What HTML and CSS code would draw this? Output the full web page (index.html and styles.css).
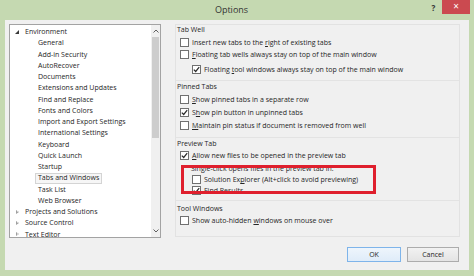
FILE: index.html
```html
<!DOCTYPE html>
<html lang="en">
<head>
    <link rel="stylesheet" href="styles.css">
</head>
<body>
    <div class="window">
        <div class="titlebar">
            <div class="title">Options</div>
            <div class="help">?</div>
            <div class="close">&#215;</div>
        </div>
        <div class="client">
            <div class="main">
                <div class="tree">
                    <ul class="tree-list">
                        <li class="node"><span class="exp open"></span>Environment</li>
                        <li class="leaf">General</li>
                        <li class="leaf">Add-in Security</li>
                        <li class="leaf">AutoRecover</li>
                        <li class="leaf">Documents</li>
                        <li class="leaf">Extensions and Updates</li>
                        <li class="leaf">Find and Replace</li>
                        <li class="leaf">Fonts and Colors</li>
                        <li class="leaf">Import and Export Settings</li>
                        <li class="leaf">International Settings</li>
                        <li class="leaf">Keyboard</li>
                        <li class="leaf">Quick Launch</li>
                        <li class="leaf">Startup</li>
                        <li class="leaf"><span class="sel">Tabs and Windows</span></li>
                        <li class="leaf">Task List</li>
                        <li class="leaf">Web Browser</li>
                        <li class="node"><span class="exp"></span>Projects and Solutions</li>
                        <li class="node"><span class="exp"></span>Source Control</li>
                        <li class="node"><span class="exp"></span>Text Editor</li>
                    </ul>
                    <div class="scrollbar">
                        <div class="sb-arrow">
                            <svg width="6" height="4" viewBox="0 0 6 4"><path d="M0.5 3.5 L3 1 L5.5 3.5" fill="none" stroke="#606060" stroke-width="1"/></svg>
                        </div>
                        <div class="thumb"></div>
                        <div class="track"></div>
                        <div class="sb-arrow">
                            <svg width="6" height="4" viewBox="0 0 6 4"><path d="M0.5 0.5 L3 3 L5.5 0.5" fill="none" stroke="#606060" stroke-width="1"/></svg>
                        </div>
                    </div>
                </div>

                <div class="panel">
                    <div class="group g-tabwell">
                        <div class="heading">Tab Well</div>
                        <div class="row r12 first"><span class="cb"></span><span>Insert new tabs to the <u>r</u>ight of existing tabs</span></div>
                        <div class="row r12"><span class="cb"></span><span><u>F</u>loating tab wells always stay on top of the main window</span></div>
                        <div class="row r12 sub nested"><span class="cb on"><svg width="7" height="7" viewBox="0 0 7 7"><path d="M0.8 3.6 L2.7 5.5 L6.2 1.2" fill="none" stroke="#2b2b2b" stroke-width="1.2"/></svg></span><span>Floating <u>t</u>ool windows always stay on top of the main window</span></div>
                    </div>

                    <div class="group g-pinned">
                        <div class="heading">Pinned Tabs</div>
                        <div class="row first"><span class="cb"></span><span><u>S</u>how pinned tabs in a separate row</span></div>
                        <div class="row"><span class="cb on"><svg width="7" height="7" viewBox="0 0 7 7"><path d="M0.8 3.6 L2.7 5.5 L6.2 1.2" fill="none" stroke="#2b2b2b" stroke-width="1.2"/></svg></span><span>S<u>h</u>ow pin button in unpinned tabs</span></div>
                        <div class="row"><span class="cb"></span><span><u>M</u>aintain pin status if document is removed from well</span></div>
                    </div>

                    <div class="group g-preview">
                        <div class="heading">Preview Tab</div>
                        <div class="row first"><span class="cb on"><svg width="7" height="7" viewBox="0 0 7 7"><path d="M0.8 3.6 L2.7 5.5 L6.2 1.2" fill="none" stroke="#2b2b2b" stroke-width="1.2"/></svg></span><span><u>A</u>llow new files to be opened in the preview tab</span></div>
                        <div class="row r12 label">Single-click opens files in the preview tab in:</div>
                        <div class="row r11 sub"><span class="cb"></span><span>Solution Ex<u>p</u>lorer (Alt+click to avoid previewing)</span></div>
                        <div class="row r11 sub"><span class="cb on"><svg width="7" height="7" viewBox="0 0 7 7"><path d="M0.8 3.6 L2.7 5.5 L6.2 1.2" fill="none" stroke="#2b2b2b" stroke-width="1.2"/></svg></span><span>Find Results</span></div>
                    </div>

                    <div class="group g-tool">
                        <div class="heading">Tool Windows</div>
                        <div class="row first"><span class="cb"></span><span>Show auto-hidden <u>w</u>indows on mouse over</span></div>
                    </div>

                    <div class="callout"></div>
                </div>
            </div>

            <div class="footer">
                <div class="btn default">OK</div>
                <div class="btn">Cancel</div>
            </div>
        </div>
    </div>
</body>
</html>
```

FILE: styles.css
```css
body {
    margin: 0;
    background: #c5d9b1;
    font-family: "Open Sans", "Noto Sans", sans-serif;
    font-size: 7px;
    color: #262626;
}

.window {
    width: 474px;
    height: 276px;
}

.titlebar {
    height: 20px;
    display: flex;
    align-items: flex-start;
}

.titlebar .title {
    flex: 1;
    padding-left: 38px;
    text-align: center;
    font-size: 9px;
    line-height: 19px;
    color: #333;
}

.titlebar .help {
    width: 17px;
    text-align: center;
    font-size: 8px;
    font-weight: bold;
    line-height: 15px;
    color: #333;
}

.titlebar .close {
    width: 28px;
    height: 14px;
    margin-right: 4px;
    background: #cb4a50;
    color: #fff;
    text-align: center;
    font-size: 10px;
    line-height: 13px;
}

.client {
    margin-left: 5px;
    width: 464px;
    height: 250px;
    background: #f0f0f0;
}

.main {
    display: flex;
    padding: 4px 0 0 4px;
}

/* tree on the left */
.tree {
    width: 150px;
    height: 212px;
    border: 1px solid #a3a3a3;
    background: #fff;
    display: flex;
}

.tree-list {
    flex: 1;
    list-style: none;
    margin: 0;
    padding: 1px 0 0 0;
    overflow: hidden;
}

.tree-list li {
    height: 11.25px;
    line-height: 11.25px;
    white-space: nowrap;
}

.tree-list .node {
    display: flex;
    align-items: center;
    padding-left: 5px;
}

.tree-list .leaf {
    padding-left: 28px;
}

.exp {
    width: 0;
    height: 0;
    margin-right: 6px;
    border-left: 3px solid #a0a0a0;
    border-top: 2.5px solid transparent;
    border-bottom: 2.5px solid transparent;
    margin-left: 1px;
    position: relative;
}

.exp::after {
    content: "";
    position: absolute;
    left: -2px;
    top: -1.5px;
    border-left: 1.6px solid #fff;
    border-top: 1.5px solid transparent;
    border-bottom: 1.5px solid transparent;
}

.exp.open {
    width: 0;
    height: 0;
    margin-left: 0;
    margin-right: 6px;
    border-left: 4px solid transparent;
    border-top: none;
    border-bottom: 4px solid #3a3a3a;
}

.exp.open::after {
    display: none;
}

.sel {
    display: inline-block;
    margin-left: -3px;
    padding: 0 2px;
    line-height: 8.5px;
    border: 1px solid #d4d4d4;
    background: #f6f6f6;
}

.scrollbar {
    width: 9px;
    display: flex;
    flex-direction: column;
    background: #f0f0f0;
}

.sb-arrow {
    height: 12px;
    display: flex;
    align-items: center;
    justify-content: center;
}

.thumb {
    height: 101px;
    margin: 0 1px;
    background: #cdcdcd;
}

.track {
    flex: 1;
}

/* options panel */
.panel {
    position: relative;
    margin-left: 14px;
    width: 283px;
    height: 211px;
    border: 1px solid #e2e2e2;
}

.group {
    border-bottom: 1px solid #e3e3e3;
}

.heading {
    height: 9px;
    line-height: 9px;
    padding-left: 1px;
}

.row {
    height: 13px;
    display: flex;
    align-items: center;
    padding-left: 4px;
    white-space: nowrap;
}

.row.r12 {
    height: 12px;
}

.row.r11 {
    height: 11px;
}

.row.sub {
    padding-left: 16px;
}

.row.nested {
    margin-top: 3px;
}

.row.label {
    padding-left: 15px;
}

.cb {
    width: 7px;
    height: 7px;
    margin-right: 3px;
    border: 1px solid #707070;
    background: #fff;
    display: flex;
    align-items: center;
    justify-content: center;
    flex-shrink: 0;
}

.g-tabwell {
    padding-bottom: 5px;
}

.g-tabwell .first {
    margin-top: 2px;
}

.g-pinned {
    padding-bottom: 5px;
}

.g-pinned .heading {
    margin-top: 1px;
}

.g-pinned .first {
    margin-top: 1.5px;
}

.g-preview {
    padding-bottom: 4px;
}

.g-preview .heading {
    margin-top: 1.5px;
}

.g-preview .first {
    margin-top: 1.2px;
}

.g-preview .r11:last-child {
    height: 10px;
    padding-bottom: 1px;
}

.g-tool {
    border-bottom: 0;
}

.g-tool .heading {
    margin-top: 3.3px;
}

.g-tool .first {
    margin-top: 0.7px;
}

.callout {
    position: absolute;
    left: 5px;
    top: 140px;
    width: 189px;
    height: 23px;
    border: 3px solid #df1f2d;
}

/* buttons */
.footer {
    display: flex;
    justify-content: flex-end;
    gap: 6px;
    padding: 9px 10px 0 0;
}

.btn {
    width: 50px;
    height: 13px;
    line-height: 13px;
    text-align: center;
    border: 1px solid #acacac;
    background: linear-gradient(#f2f2f2, #e4e4e4);
}

.btn.default {
    width: 52px;
    border-color: #7eb4ea;
    background: linear-gradient(#eef5fc, #dfecf9);
}
```
